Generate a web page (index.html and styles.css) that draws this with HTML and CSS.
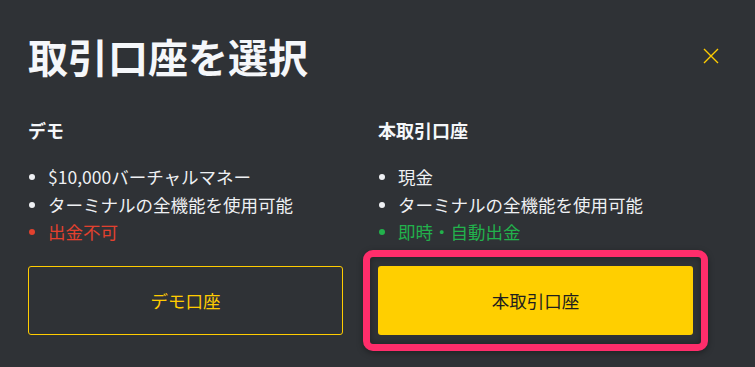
FILE: index.html
```html
<!DOCTYPE html>
<html lang="ja">
<head>
<meta charset="utf-8">
<link rel="stylesheet" href="styles.css">
</head>
<body>
<div class="modal">
  <div class="header">
    <h1 class="title">取引口座を選択</h1>
    <button class="close" aria-label="閉じる">
      <svg width="16" height="16" viewBox="0 0 16 16"><path d="M1 1L15 15M15 1L1 15" stroke="#ffcc00" stroke-width="1.4" fill="none"/></svg>
    </button>
  </div>
  <div class="columns">
    <div class="col">
      <h3 class="col-title">デモ</h3>
      <ul class="features">
        <li>$10,000バーチャルマネー</li>
        <li>ターミナルの全機能を使用可能</li>
        <li class="neg">出金不可</li>
      </ul>
      <div class="btn-wrap">
        <button class="btn btn-outline">デモ口座</button>
      </div>
    </div>
    <div class="col">
      <h3 class="col-title">本取引口座</h3>
      <ul class="features">
        <li>現金</li>
        <li>ターミナルの全機能を使用可能</li>
        <li class="pos">即時・自動出金</li>
      </ul>
      <div class="btn-wrap">
        <button class="btn btn-solid">本取引口座</button>
        <span class="highlight"></span>
      </div>
    </div>
  </div>
</div>
</body>
</html>
```
FILE: styles.css
```css
html, body {
  margin: 0;
  padding: 0;
  background: #2f3236;
  width: 755px;
  height: 367px;
  overflow: hidden;
}
body {
  font-family: "Noto Sans CJK JP", "Noto Sans", sans-serif;
  color: #f2f4f7;
}
.modal {
  padding: 28px 36px 0 28px;
}
.header {
  display: flex;
  align-items: center;
  justify-content: space-between;
}
.title {
  margin: 0;
  font-size: 40px;
  line-height: 56px;
  font-weight: 700;
  color: #f5f7fa;
}
.close {
  background: none;
  border: 0;
  padding: 0;
  width: 16px;
  height: 16px;
  display: flex;
}
.columns {
  display: grid;
  grid-template-columns: 315px 315px;
  column-gap: 35px;
  margin-top: 34px;
}
.col-title {
  margin: 0;
  font-size: 18px;
  line-height: 24px;
  font-weight: 700;
  color: #f5f7fa;
}
.features {
  list-style: none;
  margin: 21px 0 0 0;
  padding: 0;
}
.features li {
  position: relative;
  padding-left: 20px;
  font-size: 17.5px;
  line-height: 27.5px;
  color: #eef0f3;
}
.features li::before {
  content: "";
  position: absolute;
  left: 1px;
  top: 11px;
  width: 6px;
  height: 6px;
  border-radius: 50%;
  background: currentColor;
}
.features li.neg { color: #e2412e; }
.features li.pos { color: #22b14c; }
.btn-wrap {
  position: relative;
  margin-top: 20px;
}
.btn {
  display: block;
  width: 100%;
  height: 69px;
  border-radius: 3px;
  font-family: inherit;
  font-size: 17.5px;
  cursor: pointer;
}
.btn-outline {
  background: transparent;
  border: 1px solid #ffcc00;
  color: #ffcc00;
}
.btn-solid {
  background: #ffcf00;
  border: 0;
  color: #1e1e1e;
}
.highlight {
  position: absolute;
  left: -15px;
  right: -15px;
  top: -16px;
  bottom: -16px;
  border: 7px solid #ff2d6b;
  border-radius: 10px;
  box-shadow: 0 2px 6px rgba(0,0,0,0.35), inset 0 0 6px rgba(0,0,0,0.35);
  pointer-events: none;
}
```
